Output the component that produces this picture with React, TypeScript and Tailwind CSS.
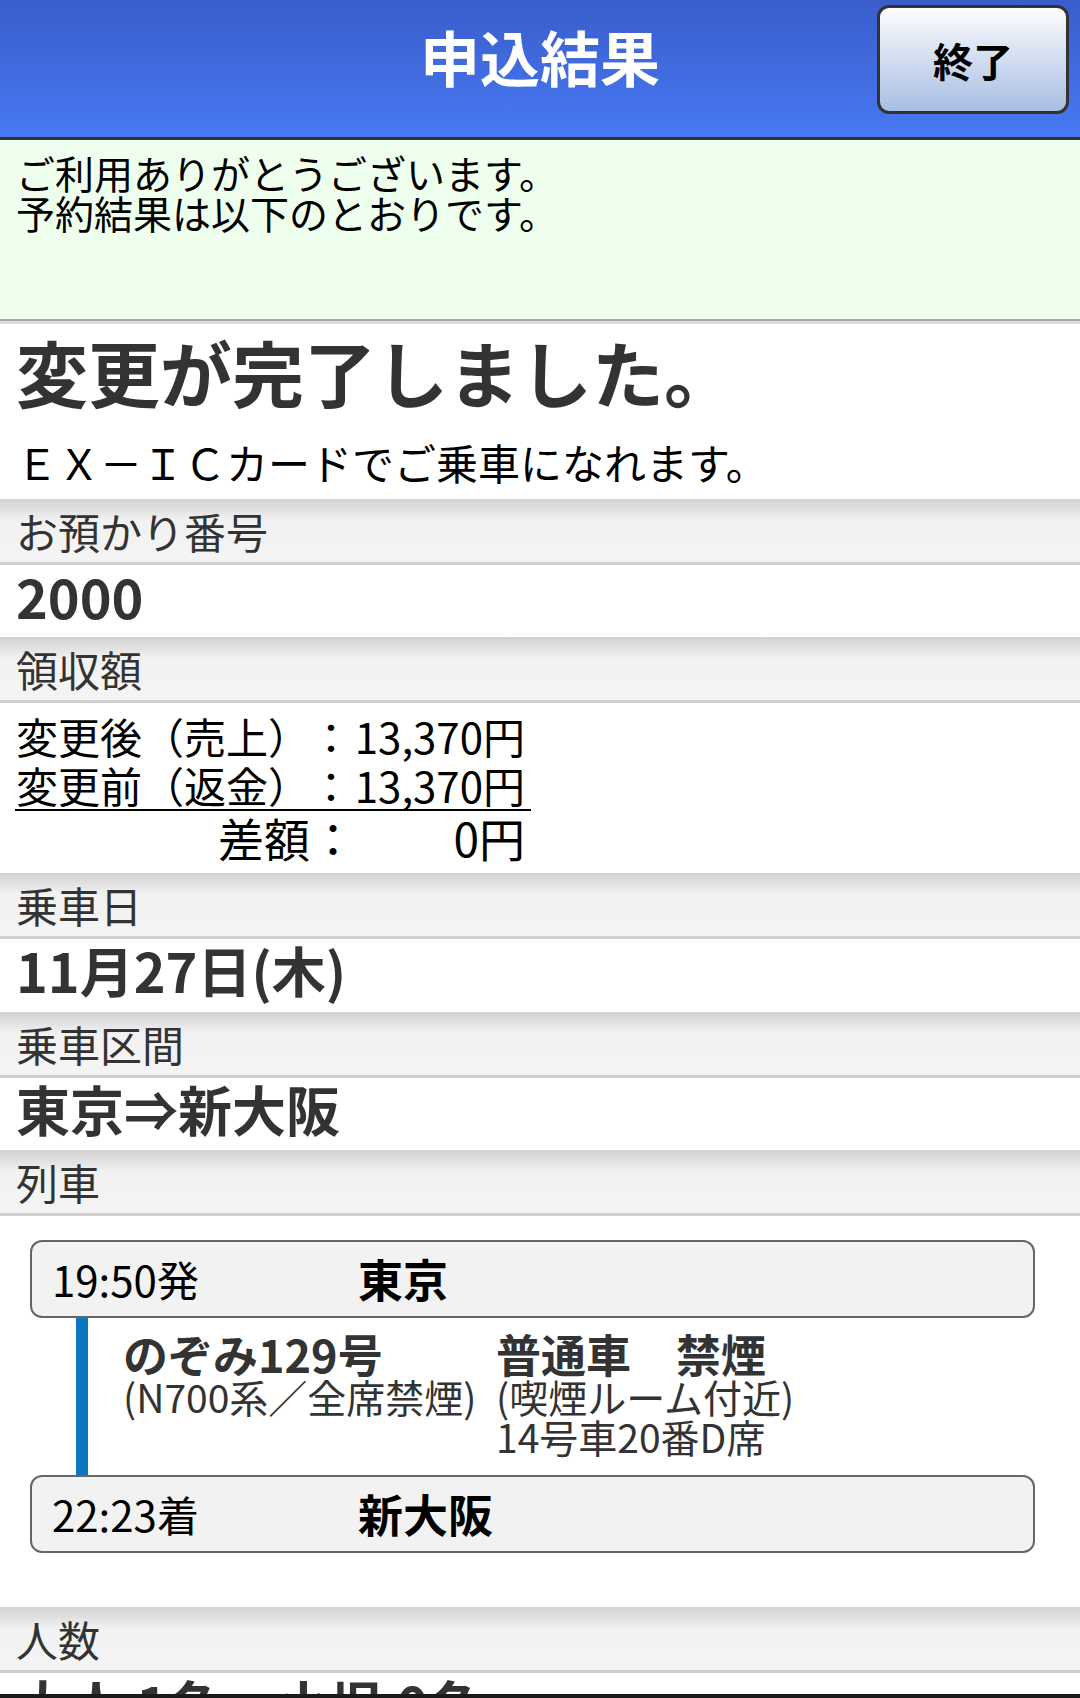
import React from "react";

function Band({ children }: { children: React.ReactNode }) {
  return (
    <div className="h-[66px] shrink-0 border-b-[3px] border-[#cfcfcf] bg-linear-to-b from-[#d2d2d2] via-[#f2f2f2] via-35% to-[#f4f4f4] pl-4 text-[42px] leading-[63px] text-[#333]">
      {children}
    </div>
  );
}

function Value({ children, h = "h-[72px]" }: { children: React.ReactNode; h?: string }) {
  return (
    <div className={`${h} shrink-0 bg-white pl-4 text-[54px] font-bold leading-[62px] text-[#333] whitespace-nowrap`}>
      {children}
    </div>
  );
}

function StationBox({ time, station }: { time: string; station: string }) {
  return (
    <div className="ml-[30px] flex h-[78px] w-[1005px] items-center rounded-[12px] border-2 border-[#666] bg-[#f2f2f2] pl-[20px] leading-[74px] text-black">
      <span className="inline-block w-[306px] text-[42px]">{time}</span>
      <span className="text-[45px] font-bold">{station}</span>
    </div>
  );
}

export default function App() {
  return (
    <div className="flex h-[1698px] w-full flex-col overflow-hidden bg-white font-['Noto_Sans_CJK_JP',sans-serif]">
      <div className="min-h-0 flex-1 overflow-hidden">
        {/* Header */}
        <div className="grid h-[140px] grid-cols-[1fr_auto_1fr] items-start border-b-[3px] border-[#333] bg-linear-to-b from-[#3a5dcb] to-[#4779f3]">
          <div />
          <div className="mt-[26px] text-[60px] font-bold leading-[60px] text-white">申込結果</div>
          <div className="flex justify-end pr-[11px] pt-[5px]">
            <button className="flex h-[109px] w-[192px] items-center justify-center rounded-[12px] border-[3px] border-[#333] bg-linear-to-b from-[#fdfdfe] to-[#a8bee2] text-[40px] font-bold text-black">
              終了
            </button>
          </div>
        </div>

        {/* Message */}
        <div className="h-[181px] border-b-2 border-[#a8a8a8] bg-[#eeffee] pl-4 pt-[12px] text-[39px] leading-[40px] text-black">
          <div>ご利用ありがとうございます。</div>
          <div>予約結果は以下のとおりです。</div>
        </div>

        {/* Title */}
        <div className="h-[178px] border-t-[3px] border-[#dcdcdc] bg-white px-4 pt-[7px]">
          <div className="text-[72px] font-bold leading-[80px] text-[#333]">変更が完了しました。</div>
          <div className="mt-[26px] text-[42px] leading-[50px] text-black">ＥＸ－ＩＣカードでご乗車になれます。</div>
        </div>

        <Band>お預かり番号</Band>
        <Value>2000</Value>

        <Band>領収額</Band>
        <div className="h-[170px] bg-white pl-[15px] pt-[8px] text-black">
          <div className="grid w-[516px] grid-cols-[295px_42px_179px]">
            <div className="text-right text-[42px] leading-[49px]">変更後（売上）</div>
            <div className="text-center text-[42px] leading-[49px]">：</div>
            <div className="pr-[6px] text-right text-[42px] leading-[49px]">13,370円</div>

            <div className="border-b-2 border-black text-right text-[42px] leading-[49px]">変更前（返金）</div>
            <div className="border-b-2 border-black text-center text-[42px] leading-[49px]">：</div>
            <div className="border-b-2 border-black pr-[6px] text-right text-[42px] leading-[49px]">13,370円</div>

            <div className="pt-[3px] text-right text-[46px] leading-[46px]">差額</div>
            <div className="pt-[3px] text-center text-[46px] leading-[46px]">：</div>
            <div className="pr-[6px] pt-[3px] text-right text-[46px] leading-[46px]">0円</div>
          </div>
        </div>

        <Band>乗車日</Band>
        <Value h="h-[73px]">11月27日(木)</Value>

        <Band>乗車区間</Band>
        <Value>東京⇒新大阪</Value>

        <Band>列車</Band>
        <div className="h-[391px] bg-white pt-[24px]">
          <StationBox time="19:50発" station="東京" />
          <div className="ml-[76px] flex h-[157px]">
            <div className="w-[12px] bg-[#0a78be]" />
            <div className="grid grid-cols-[373px_auto] pl-[35px] pt-[13px] text-[#333]">
              <div>
                <div className="text-[45px] font-bold leading-[45px]">のぞみ129号</div>
                <div className="text-[39px] leading-[40px]">(N700系／全席禁煙)</div>
              </div>
              <div>
                <div className="text-[45px] font-bold leading-[45px]">普通車　禁煙</div>
                <div className="text-[39px] leading-[40px]">(喫煙ルーム付近)</div>
                <div className="text-[39px] leading-[40px]">14号車20番D席</div>
              </div>
            </div>
          </div>
          <StationBox time="22:23着" station="新大阪" />
        </div>

        <Band>人数</Band>
        <Value>
          大人 1名<span className="inline-block w-[54px]" />小児 0名
        </Value>
      </div>
      <div className="h-[4px] shrink-0 bg-[#1b1b1b]" />
    </div>
  );
}
